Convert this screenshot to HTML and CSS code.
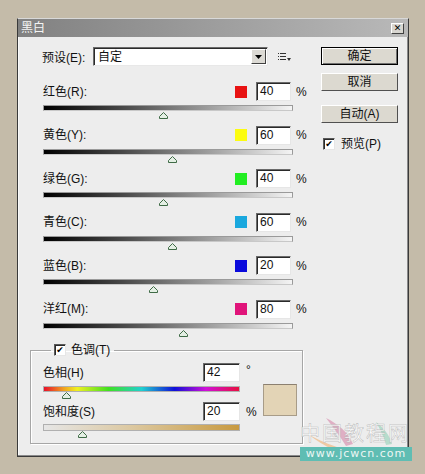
FILE: index.html
```html
<!DOCTYPE html>
<html lang="zh-CN">
<head>
<meta charset="utf-8">
<title>黑白</title>
<link rel="stylesheet" href="styles.css">
</head>
<body>
<div class="dialog">
  <div class="titlebar">
    <span class="title">黑白</span>
    <span class="close">✕</span>
  </div>
  <div class="body">
    <div class="main">
      <div class="preset">
        <span class="preset-label">预设(E):</span>
        <div class="select">
          <span class="select-text">自定</span>
          <span class="select-btn"><svg width="7" height="4" viewBox="0 0 7 4"><path d="M0 0H7L3.5 4Z" fill="#000"/></svg></span>
        </div>
        <svg class="menu-icon" width="13" height="10" viewBox="0 0 13 10">
          <g fill="#333"><rect x="0" y="1" width="1" height="1"/><rect x="2" y="1" width="6" height="1"/><rect x="0" y="4" width="1" height="1"/><rect x="2" y="4" width="6" height="1"/><rect x="0" y="7" width="1" height="1"/><rect x="2" y="7" width="6" height="1"/><path d="M9 6H13L11 9Z"/></g>
        </svg>
      </div>

      <div class="channels">
        <div class="channel">
          <div class="ch-head"><span class="ch-label">红色(R):</span><span class="swatch sw-red"></span><span class="field">40</span><span class="unit">%</span></div>
          <div class="track"></div>
          <div class="thumb-line"><svg class="thumb" style="margin-left:116px" width="9" height="7" viewBox="0 0 9 7"><path d="M4.5 0.5L8.5 4.5V6.5H0.5V4.5Z" fill="#e4efe4" stroke="#3f6b46"/></svg></div>
        </div>
        <div class="channel">
          <div class="ch-head"><span class="ch-label">黄色(Y):</span><span class="swatch sw-yellow"></span><span class="field">60</span><span class="unit">%</span></div>
          <div class="track"></div>
          <div class="thumb-line"><svg class="thumb" style="margin-left:125px" width="9" height="7" viewBox="0 0 9 7"><path d="M4.5 0.5L8.5 4.5V6.5H0.5V4.5Z" fill="#e4efe4" stroke="#3f6b46"/></svg></div>
        </div>
        <div class="channel">
          <div class="ch-head"><span class="ch-label">绿色(G):</span><span class="swatch sw-green"></span><span class="field">40</span><span class="unit">%</span></div>
          <div class="track"></div>
          <div class="thumb-line"><svg class="thumb" style="margin-left:116px" width="9" height="7" viewBox="0 0 9 7"><path d="M4.5 0.5L8.5 4.5V6.5H0.5V4.5Z" fill="#e4efe4" stroke="#3f6b46"/></svg></div>
        </div>
        <div class="channel">
          <div class="ch-head"><span class="ch-label">青色(C):</span><span class="swatch sw-cyan"></span><span class="field">60</span><span class="unit">%</span></div>
          <div class="track"></div>
          <div class="thumb-line"><svg class="thumb" style="margin-left:125px" width="9" height="7" viewBox="0 0 9 7"><path d="M4.5 0.5L8.5 4.5V6.5H0.5V4.5Z" fill="#e4efe4" stroke="#3f6b46"/></svg></div>
        </div>
        <div class="channel">
          <div class="ch-head"><span class="ch-label">蓝色(B):</span><span class="swatch sw-blue"></span><span class="field">20</span><span class="unit">%</span></div>
          <div class="track"></div>
          <div class="thumb-line"><svg class="thumb" style="margin-left:106px" width="9" height="7" viewBox="0 0 9 7"><path d="M4.5 0.5L8.5 4.5V6.5H0.5V4.5Z" fill="#e4efe4" stroke="#3f6b46"/></svg></div>
        </div>
        <div class="channel">
          <div class="ch-head"><span class="ch-label">洋红(M):</span><span class="swatch sw-magenta"></span><span class="field">80</span><span class="unit">%</span></div>
          <div class="track"></div>
          <div class="thumb-line"><svg class="thumb" style="margin-left:136px" width="9" height="7" viewBox="0 0 9 7"><path d="M4.5 0.5L8.5 4.5V6.5H0.5V4.5Z" fill="#e4efe4" stroke="#3f6b46"/></svg></div>
        </div>
      </div>

      <fieldset class="tint">
        <legend class="tint-legend"><span class="check">✔</span><span>色调(T)</span></legend>
        <div class="tint-body">
          <div class="tint-controls">
            <div class="t-head"><span class="ch-label">色相(H)</span><span class="field wide">42</span><span class="t-unit deg">°</span></div>
            <div class="hue-bar"></div>
            <div class="t-thumb-line"><svg class="thumb" style="margin-left:19px" width="9" height="7" viewBox="0 0 9 7"><path d="M4.5 0.5L8.5 4.5V6.5H0.5V4.5Z" fill="#e4efe4" stroke="#3f6b46"/></svg></div>
            <div class="t-head second"><span class="ch-label">饱和度(S)</span><span class="field wide">20</span><span class="t-unit">%</span></div>
            <div class="sat-bar"></div>
            <div class="t-thumb-line"><svg class="thumb" style="margin-left:35px" width="9" height="7" viewBox="0 0 9 7"><path d="M4.5 0.5L8.5 4.5V6.5H0.5V4.5Z" fill="#e4efe4" stroke="#3f6b46"/></svg></div>
          </div>
          <div class="tint-swatch"></div>
        </div>
      </fieldset>
    </div>

    <div class="side">
      <div class="btn default"><span class="btn-in">确定</span></div>
      <div class="btn b-cancel"><span class="btn-in">取消</span></div>
      <div class="btn b-auto"><span class="btn-in">自动(A)</span></div>
      <div class="preview"><span class="check">✔</span><span>预览(P)</span></div>
    </div>
  </div>
</div>

<div class="watermark">
  <svg class="wm-strokes" width="110" height="50" viewBox="0 0 110 50">
    <path d="M28 6 C40 12 50 20 55 32 L48 34 C42 24 34 14 28 6Z" fill="#d99ab6" opacity="0.75"/>
    <path d="M78 10 C86 16 92 24 94 32 L88 33 C86 25 82 17 78 10Z" fill="#9fd4be" opacity="0.7"/>
    <path d="M10 22 C20 30 40 44 70 46 C56 40 30 34 10 22Z" fill="#f0b070" opacity="0.6"/>
  </svg>
  <div class="wm-title">中国教程网</div>
  <div class="wm-url">www.jcwcn.com</div>
</div>
</body>
</html>
```

FILE: styles.css
```css
* { box-sizing: border-box; }

html, body {
  margin: 0;
  padding: 0;
}

body {
  width: 425px;
  height: 474px;
  background: #c4bba9;
  font-family: "Liberation Sans", "Noto Sans CJK SC", sans-serif;
  font-size: 12px;
  color: #111;
  overflow: hidden;
  position: relative;
}

.dialog {
  margin: 18px 0 0 17px;
  width: 392px;
  height: 439px;
  background: #ededed;
  border: 1px solid #3a3a3a;
  border-top-color: #d8d8d8;
  border-left-color: #3a3a3a;
  box-shadow: inset -1px -1px 0 #8a8a8a, inset 1px 0 0 #fafafa;
}

.titlebar {
  height: 18px;
  background: linear-gradient(to right, #818181, #b9b9b9);
  display: flex;
  align-items: center;
  justify-content: space-between;
  padding: 0 4px 0 3px;
}

.title {
  color: #f4f4f4;
  font-size: 12px;
  line-height: 14px;
}

.close {
  width: 13px;
  height: 11px;
  background: #d8d6d0;
  border: 1px solid;
  border-color: #ffffff #404040 #404040 #ffffff;
  font-size: 9px;
  font-weight: bold;
  line-height: 9px;
  text-align: center;
  color: #000;
  font-family: "DejaVu Sans", sans-serif;
}

.body {
  display: flex;
  padding: 10px 0 0 12px;
}

.main {
  width: 276px;
}

/* preset row */
.preset {
  display: flex;
  align-items: center;
  height: 19px;
  padding-left: 12px;
}

.preset-label {
  width: 51px;
}

.select {
  width: 175px;
  height: 19px;
  background: #fff;
  border: 1px solid;
  border-color: #6a6a6a #e8e8e8 #e8e8e8 #6a6a6a;
  box-shadow: inset 1px 1px 0 #2a2a2a;
  display: flex;
  align-items: center;
  justify-content: space-between;
  padding: 0 1px 0 4px;
}

.select-text {
  line-height: 14px;
}

.select-btn {
  width: 15px;
  height: 15px;
  background: #dcdad4;
  border: 1px solid;
  border-color: #ffffff #404040 #404040 #ffffff;
  display: flex;
  align-items: center;
  justify-content: center;
}

.menu-icon {
  margin-left: 10px;
}

/* channels */
.channels {
  margin-top: 16px;
}

.channel {
  height: 43.5px;
  padding-left: 13px;
}

.ch-head {
  display: flex;
  align-items: center;
  height: 19px;
}

.ch-label {
  flex: 1;
  line-height: 14px;
}

.swatch {
  width: 12px;
  height: 12px;
  margin-right: 9px;
}

.sw-red { background: #e81212; }
.sw-yellow { background: #fcfc10; }
.sw-green { background: #22ee22; }
.sw-cyan { background: #1aa8de; }
.sw-blue { background: #0a0adc; }
.sw-magenta { background: #e0147a; }

.field {
  width: 35px;
  height: 19px;
  background: #fff;
  border: 1px solid;
  border-color: #6a6a6a #e6e6e6 #e6e6e6 #6a6a6a;
  box-shadow: inset 1px 1px 0 #2a2a2a;
  padding-left: 3px;
  line-height: 16px;
  font-size: 12px;
}

.field.wide {
  width: 37px;
}

.unit {
  width: 15px;
  padding-left: 5px;
  line-height: 14px;
}

.track {
  margin-top: 4px;
  width: 250px;
  height: 6px;
  border: 1px solid #9a9a9a;
  border-bottom-color: #c8c8c8;
  background: linear-gradient(to right, #000 0%, #444 30%, #9a9a9a 65%, #f4f4f4 100%);
}

.thumb-line {
  height: 8px;
  margin-top: 1px;
  display: flex;
}

.thumb {
  display: block;
}

/* tint group */
.tint {
  margin: 0;
  width: 273px;
  padding: 0 0 5px 12px;
  border: 1px solid #a6a6a6;
  box-shadow: 1px 1px 0 #ffffff, inset 1px 1px 0 #ffffff;
  min-width: 0;
}

.tint-legend {
  margin-left: 8px;
  padding: 0 4px 0 3px;
  display: flex;
  align-items: center;
  gap: 5px;
  height: 14px;
  line-height: 14px;
}

.check {
  width: 12px;
  height: 12px;
  background: #fff;
  border: 1px solid;
  border-color: #5a5a5a #e6e6e6 #e6e6e6 #5a5a5a;
  box-shadow: inset 1px 1px 0 #2a2a2a;
  font-size: 9px;
  line-height: 10px;
  text-align: center;
  font-family: "DejaVu Sans", sans-serif;
  font-weight: bold;
  color: #000;
}

.tint-body {
  display: flex;
  margin-top: 6px;
}

.tint-controls {
  width: 220px;
}

.t-head {
  display: flex;
  align-items: center;
  height: 19px;
  width: 220px;
}

.t-head.second {
  margin-top: 3px;
}

.t-unit {
  width: 23px;
  padding-left: 6px;
  line-height: 14px;
}

.t-unit.deg {
  align-self: flex-start;
  line-height: 12px;
  padding-top: 1px;
}

.hue-bar {
  margin-top: 4px;
  width: 197px;
  height: 6px;
  border: 1px solid #b0b0b0;
  background: linear-gradient(to right, #e8102a 0%, #f0a020 10%, #f0f020 17%, #40e020 33%, #20d0d0 50%, #1010d8 67%, #d010d8 83%, #e81040 100%);
}

.sat-bar {
  margin-top: 3px;
  width: 197px;
  height: 7px;
  border: 1px solid #b0b0b0;
  background: linear-gradient(to right, #e6e6e6 0%, #dcc8a0 45%, #c89a40 100%);
}

.t-thumb-line {
  height: 7px;
  margin-top: 0;
  display: flex;
}

.tint-swatch {
  margin-top: 21px;
  width: 34px;
  height: 32px;
  background: #e3d4b6;
  border: 1px solid #a89c88;
  border-top-color: #8c8070;
}

/* side buttons */
.side {
  margin-left: 15px;
  width: 77px;
  display: flex;
  flex-direction: column;
}

.btn {
  height: 18px;
  background: #dcd9d0;
  border: 1px solid;
  border-color: #ffffff #505050 #505050 #ffffff;
  display: flex;
  align-items: center;
  justify-content: center;
}

.btn-in {
  line-height: 14px;
  font-size: 12px;
}

.btn.default {
  border: 1px solid #000;
  box-shadow: inset 1px 1px 0 #ffffff, inset -1px -1px 0 #707070;
}

.b-cancel {
  margin-top: 8px;
}

.b-auto {
  margin-top: 14px;
}

.preview {
  margin-top: 14px;
  margin-left: 2px;
  display: flex;
  align-items: center;
  gap: 6px;
  line-height: 14px;
}

/* watermark overlay */
.watermark {
  position: absolute;
  left: 298px;
  top: 412px;
  width: 116px;
  height: 56px;
}

.wm-strokes {
  position: absolute;
  left: 0;
  top: 0;
}

.wm-title {
  position: absolute;
  left: 2px;
  top: 10px;
  font-family: "Noto Sans CJK SC", sans-serif;
  font-size: 20px;
  letter-spacing: 2px;
  color: rgba(255, 255, 255, 0.8);
  -webkit-text-stroke: 0.5px rgba(150, 150, 150, 0.6);
  line-height: 22px;
}

.wm-url {
  position: absolute;
  left: 2px;
  top: 35px;
  width: 112px;
  height: 14px;
  background: #5fbdb3;
  color: #eef6f4;
  font-family: "DejaVu Sans", sans-serif;
  font-size: 11px;
  line-height: 14px;
  letter-spacing: 1px;
  text-align: center;
}
```
